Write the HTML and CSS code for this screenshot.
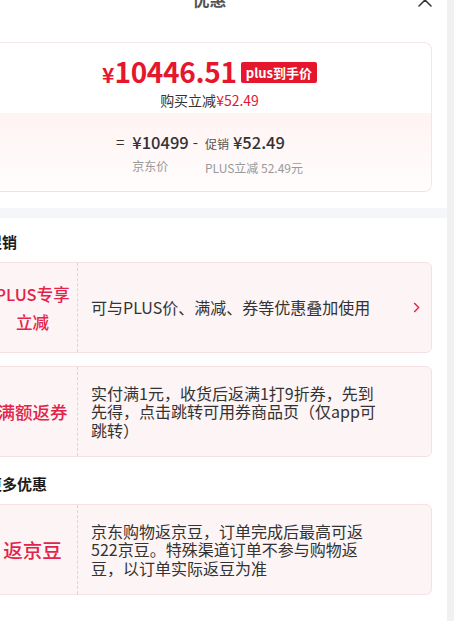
FILE: index.html
```html
<!DOCTYPE html>
<html lang="zh-CN">
<head>
    <meta charset="UTF-8">
    <meta name="viewport" content="width=device-width, initial-scale=1.0">
    <title>优惠</title>
    <link rel="stylesheet" href="styles.css">
</head>
<body>
    <div class="sheet">
        <div class="sheet-header">
            <span class="sheet-title">优惠</span>
            <span class="sheet-close">
                <svg width="14" height="14" viewBox="0 0 14 14"><path d="M1 1 L13 13 M13 1 L1 13" stroke="#333" stroke-width="1.5" fill="none" stroke-linecap="round"/></svg>
            </span>
        </div>

        <div class="summary-wrap">
            <div class="summary">
                <div class="summary-top">
                    <div class="final-price">
                        <span class="yen">¥</span><span class="amount">10446.51</span>
                        <span class="price-badge">plus到手价</span>
                    </div>
                    <div class="saving">购买立减<span class="red">¥52.49</span></div>
                </div>
                <div class="summary-bottom">
                    <div class="calc">
                        <span class="op">=</span>
                        <div class="calc-col">
                            <div class="calc-val">¥10499</div>
                            <div class="calc-label">京东价</div>
                        </div>
                        <span class="op op-minus">-</span>
                        <div class="calc-col">
                            <div class="calc-val"><span class="calc-tag">促销</span>¥52.49</div>
                            <div class="calc-label">PLUS立减 52.49元</div>
                        </div>
                    </div>
                </div>
            </div>
        </div>

        <div class="band"></div>

        <div class="section">
            <div class="section-title">促销</div>
            <div class="promo">
                <div class="promo-label label-plus">PLUS专享<br>立减</div>
                <div class="promo-body">可与PLUS价、满减、券等优惠叠加使用</div>
                <div class="promo-arrow">
                    <svg width="7" height="11" viewBox="0 0 7 11"><path d="M1.2 1 L5.6 5.5 L1.2 10" stroke="#e3234a" stroke-width="1.4" fill="none"/></svg>
                </div>
            </div>
            <div class="promo">
                <div class="promo-label label-coupon">满额返券</div>
                <div class="promo-body">实付满1元，收货后返满1打9折券，先到先得，点击跳转可用券商品页（仅app可跳转）</div>
                <div class="promo-arrow"></div>
            </div>
        </div>

        <div class="section">
            <div class="section-title">更多优惠</div>
            <div class="promo">
                <div class="promo-label label-bean">返京豆</div>
                <div class="promo-body">京东购物返京豆，订单完成后最高可返522京豆。特殊渠道订单不参与购物返豆，以订单实际返豆为准</div>
                <div class="promo-arrow"></div>
            </div>
        </div>
    </div>
    <div class="scroll-strip"></div>
</body>
</html>
```

FILE: styles.css
```css
body {
    margin: 0;
    padding: 0;
    height: 100vh;
    display: flex;
    overflow: hidden;
    background-color: #fff;
    color: #333;
    font-family: 'Noto Sans CJK SC', 'Noto Sans', sans-serif;
}

.sheet {
    flex-shrink: 0;
    width: 475px;
    margin-left: -28px;
}

.scroll-strip {
    flex: 1;
    background-color: #f1f1f1;
}

.sheet-header {
    height: 44px;
    margin-top: -24px;
    display: flex;
    justify-content: center;
    align-items: center;
    position: relative;
}

.sheet-title {
    font-size: 17px;
    font-weight: bold;
    color: #555;
}

.sheet-close {
    position: absolute;
    right: 15px;
    top: 17px;
    line-height: 0;
}

.summary-wrap {
    padding: 22px 15px 0;
}

.summary {
    border: 1px solid #f1e6e8;
    border-bottom-color: #f7dde1;
    border-radius: 8px;
    overflow: hidden;
}

.summary-top {
    padding: 12px 0 3px;
    text-align: center;
}

.final-price {
    display: flex;
    justify-content: center;
    align-items: baseline;
    line-height: 32px;
    color: #e6162d;
    font-weight: bold;
}

.yen {
    font-size: 21px;
}

.amount {
    font-size: 28px;
    letter-spacing: -0.3px;
}

.price-badge {
    align-self: center;
    margin-left: 4px;
    padding: 0 5px;
    background-color: #e6162d;
    color: #fff;
    font-size: 13px;
    line-height: 21px;
    border-radius: 2px;
}

.saving {
    font-size: 14px;
    line-height: 20px;
    color: #333;
}

.red {
    color: #e6162d;
}

.summary-bottom {
    padding: 17px 0 14px;
    background: linear-gradient(#fff3f3, #fffdfd);
}

.calc {
    display: flex;
    justify-content: center;
    align-items: flex-start;
}

.op {
    font-size: 15px;
    line-height: 24px;
    margin-right: 8px;
    color: #333;
}

.op-minus {
    margin: 0 7px 0 4px;
}

.calc-val {
    font-size: 16.5px;
    line-height: 24px;
    font-weight: 500;
    color: #333;
}

.calc-tag {
    font-size: 12px;
    font-weight: normal;
    color: #555;
    margin-right: 4px;
}

.calc-label {
    margin-top: 3px;
    font-size: 12px;
    line-height: 18px;
    color: #999;
}

.band {
    height: 10px;
    margin-top: 16px;
    background-color: #f5f6f9;
}

.section {
    padding: 14px 15px 3px;
}

.section-title {
    font-size: 15px;
    font-weight: bold;
    line-height: 20px;
    color: #1a1a1a;
    margin-bottom: 10px;
}

.promo {
    display: flex;
    align-items: center;
    height: 91px;
    box-sizing: border-box;
    background-color: #fdf4f5;
    border: 1px solid #f5e1e4;
    border-radius: 6px;
}

.promo + .promo {
    margin-top: 13px;
}

.promo-label {
    flex-shrink: 0;
    width: 89px;
    height: 100%;
    display: flex;
    align-items: center;
    justify-content: center;
    text-align: center;
    border-right: 1px dashed #f0cbd1;
    color: #e3234a;
    font-weight: 500;
}

.label-plus {
    font-size: 16.5px;
    line-height: 28px;
}

.label-coupon {
    font-size: 17.5px;
}

.label-bean {
    font-size: 19.5px;
}

.promo-body {
    flex: 1;
    padding-left: 13px;
    font-size: 16px;
    line-height: 18.5px;
    color: #333;
}

.promo-arrow {
    flex-shrink: 0;
    width: 45px;
    padding-right: 11px;
    box-sizing: border-box;
    text-align: right;
    line-height: 0;
}
```
